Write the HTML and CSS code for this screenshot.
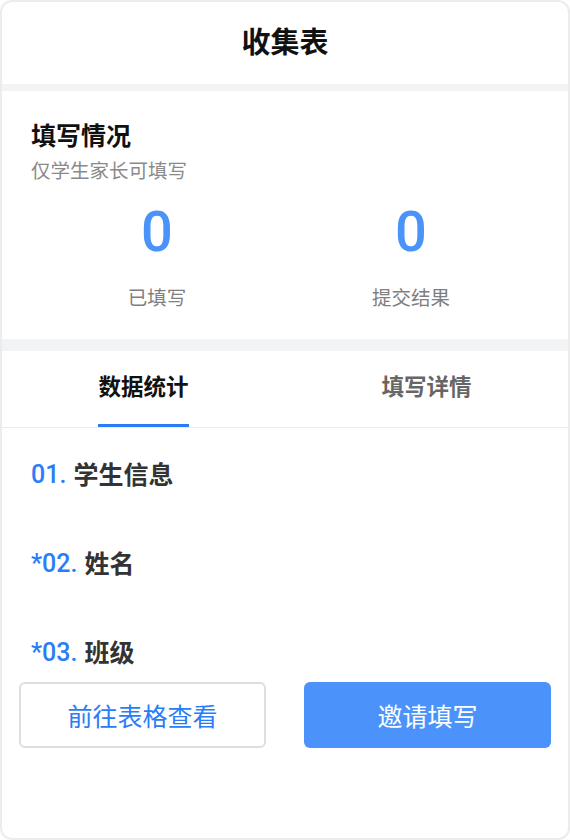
FILE: index.html
```html
<!DOCTYPE html>
<html lang="zh-CN">
<head>
<meta charset="utf-8">
<title>收集表</title>
<link rel="stylesheet" href="styles.css">
</head>
<body>
<div class="frame">
  <header class="header">收集表</header>
  <div class="band band-thin"></div>
  <section class="summary">
    <h2 class="summary-title">填写情况</h2>
    <p class="summary-sub">仅学生家长可填写</p>
    <div class="stats">
      <div class="stat">
        <div class="stat-num">0</div>
        <div class="stat-label">已填写</div>
      </div>
      <div class="stat">
        <div class="stat-num">0</div>
        <div class="stat-label">提交结果</div>
      </div>
    </div>
  </section>
  <div class="band band-thick"></div>
  <nav class="tabs">
    <div class="tab active"><span class="tab-text">数据统计</span></div>
    <div class="tab"><span class="tab-text">填写详情</span></div>
  </nav>
  <ul class="questions">
    <li class="q"><span class="q-no">01.</span><span class="q-text">学生信息</span></li>
    <li class="q"><span class="q-no">*02.</span><span class="q-text">姓名</span></li>
    <li class="q"><span class="q-no">*03.</span><span class="q-text">班级</span></li>
  </ul>
  <div class="actions">
    <button class="btn btn-outline">前往表格查看</button>
    <button class="btn btn-primary">邀请填写</button>
  </div>
</div>
</body>
</html>
```

FILE: styles.css
```css
* { box-sizing: border-box; }
html, body { margin: 0; padding: 0; background: #fff; }
body {
  font-family: "Liberation Sans", "Noto Sans CJK SC", sans-serif;
}
.frame {
  width: 570px;
  height: 840px;
  border: 2px solid #ececec;
  border-radius: 12px;
  overflow: hidden;
  display: flex;
  flex-direction: column;
  background: #fff;
}
.header {
  height: 82px;
  line-height: 82px;
  text-align: center;
  font-size: 29px;
  font-weight: 700;
  color: #111;
}
.band { background: #f2f3f5; flex: none; }
.band-thin { height: 7px; }
.band-thick { height: 12px; }
.summary {
  padding: 28px 0 27px;
}
.summary-title {
  margin: 0;
  padding-left: 29px;
  font-size: 25px;
  line-height: 34px;
  font-weight: 700;
  color: #111;
}
.summary-sub {
  margin: 5px 0 0;
  padding-left: 29px;
  font-size: 19.5px;
  line-height: 26px;
  color: #8a8a8a;
}
.stats {
  display: grid;
  grid-template-columns: 1fr 1fr;
  padding: 0 30px 0 28px;
  margin-top: 16px;
}
.stat { text-align: center; }
.stat-num {
  font-family: Roboto, "Liberation Sans", sans-serif;
  font-size: 56px;
  line-height: 64px;
  font-weight: 500;
  color: #4a93f8;
}
.stat-label {
  margin-top: 20px;
  font-size: 19.5px;
  line-height: 28px;
  color: #7f7f7f;
}
.tabs {
  display: flex;
  border-bottom: 1px solid #ebebeb;
}
.tab {
  flex: 1;
  text-align: center;
  padding-top: 22px;
}
.tab-text {
  display: inline-block;
  font-size: 22.5px;
  line-height: 30px;
  font-weight: 700;
  color: #666;
  padding-bottom: 21px;
  border-bottom: 3px solid transparent;
}
.tab.active .tab-text {
  color: #111;
  border-bottom-color: #2a7df6;
}
.questions {
  list-style: none;
  margin: 0;
  padding: 30px 0 0 29px;
  display: flex;
  flex-direction: column;
  gap: 55px;
}
.q {
  display: flex;
  align-items: center;
  height: 34px;
  font-size: 25px;
  line-height: 34px;
}
.q-no {
  font-family: Roboto, "Liberation Sans", sans-serif;
  font-weight: 500;
  color: #2a7df6;
  margin-right: 7px;
}
.q-text {
  color: #333;
  font-weight: 600;
}
.actions {
  display: flex;
  justify-content: space-between;
  padding: 0 17px;
  margin-top: 12px;
}
.btn {
  flex: 0 0 247px;
  height: 66px;
  border-radius: 6px;
  font-family: "Liberation Sans", "Noto Sans CJK SC", sans-serif;
  font-size: 25px;
  cursor: pointer;
}
.btn-outline {
  background: #fff;
  border: 2px solid #dedede;
  color: #2a7df6;
}
.btn-primary {
  background: #4b93fb;
  border: none;
  color: #fff;
}
```
